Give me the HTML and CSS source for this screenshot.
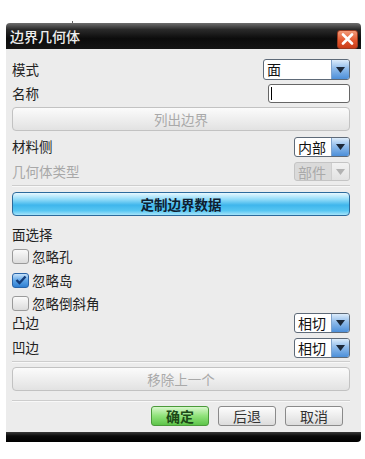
FILE: index.html
```html
<!DOCTYPE html>
<html lang="zh-CN">
<head>
    <meta charset="UTF-8">
    <meta name="viewport" content="width=device-width, initial-scale=1.0">
    <title>边界几何体</title>
    <link rel="stylesheet" href="styles.css">
</head>
<body>
    <div class="dialog">
        <div class="titlebar">
            <span class="title">边界几何体</span>
            <span class="close">
                <svg width="13" height="12" viewBox="0 0 13 12">
                    <path d="M2 1.5 L11 10.5 M11 1.5 L2 10.5" stroke="#fff" stroke-width="2.6" stroke-linecap="round" />
                </svg>
            </span>
        </div>

        <div class="pane">
            <div class="row r-mode">
                <span class="label">模式</span>
                <div class="select wide">
                    <span class="value">面</span>
                    <span class="arrow"><svg width="9" height="6" viewBox="0 0 9 6"><path d="M0 0 H9 L4.5 6 Z" /></svg></span>
                </div>
            </div>
            <div class="row r-name">
                <span class="label">名称</span>
                <div class="textbox"><span class="caret"></span></div>
            </div>
            <div class="btn disabled r-list">列出边界</div>

            <div class="row r-side">
                <span class="label">材料侧</span>
                <div class="select">
                    <span class="value">内部</span>
                    <span class="arrow"><svg width="9" height="6" viewBox="0 0 9 6"><path d="M0 0 H9 L4.5 6 Z" /></svg></span>
                </div>
            </div>
            <div class="row r-type">
                <span class="label muted">几何体类型</span>
                <div class="select off">
                    <span class="value">部件</span>
                    <span class="arrow"><svg width="9" height="6" viewBox="0 0 9 6"><path d="M0 0 H9 L4.5 6 Z" /></svg></span>
                </div>
            </div>
            <div class="sep s-1"></div>
            <div class="btn blue r-custom">定制边界数据</div>

            <div class="label group">面选择</div>
            <label class="check c-1"><span class="box"></span>忽略孔</label>
            <label class="check c-2"><span class="box on">
                <svg width="12" height="10" viewBox="0 0 12 10"><path d="M1.5 5 L4.5 8 L10.5 1.5" fill="none" stroke="#143c7a" stroke-width="2.4" /></svg>
            </span>忽略岛</label>
            <label class="check c-3"><span class="box"></span>忽略倒斜角</label>

            <div class="row r-convex">
                <span class="label">凸边</span>
                <div class="select">
                    <span class="value">相切</span>
                    <span class="arrow"><svg width="9" height="6" viewBox="0 0 9 6"><path d="M0 0 H9 L4.5 6 Z" /></svg></span>
                </div>
            </div>
            <div class="row r-concave">
                <span class="label">凹边</span>
                <div class="select">
                    <span class="value">相切</span>
                    <span class="arrow"><svg width="9" height="6" viewBox="0 0 9 6"><path d="M0 0 H9 L4.5 6 Z" /></svg></span>
                </div>
            </div>
            <div class="sep s-2"></div>
            <div class="btn disabled r-remove">移除上一个</div>
            <div class="sep s-3"></div>

            <div class="footer">
                <span class="fbtn ok">确定</span>
                <span class="fbtn">后退</span>
                <span class="fbtn">取消</span>
            </div>
        </div>
        <div class="bottombar"></div>
    </div>
</body>
</html>
```

FILE: styles.css
```css
body {
    margin: 0;
    background: #fff;
    font-family: "Noto Sans CJK SC", "Noto Sans", sans-serif;
}

.dialog {
    width: 355px;
    margin: 23px 0 0 6px;
}

/* title bar */
.titlebar {
    position: relative;
    height: 26px;
    display: flex;
    align-items: center;
    justify-content: space-between;
    padding: 0 3px 0 4px;
    border-radius: 4px 4px 0 0;
    background: linear-gradient(#6e6e6e 0%, #2a2a2a 25%, #0c0c0c 60%, #151515 100%);
}

.titlebar::before {
    content: "";
    position: absolute;
    left: 66px;
    top: -2px;
    width: 1px;
    height: 2px;
    background: #666;
}

.title {
    color: #eee;
    font-size: 14px;
    font-weight: 500;
    line-height: 1;
}

.close {
    width: 21px;
    height: 19px;
    margin-top: 6px;
    display: flex;
    align-items: center;
    justify-content: center;
    box-sizing: border-box;
    border: 1px solid #9a3a20;
    border-radius: 3px;
    background: linear-gradient(#f39a78, #e4582f 55%, #c83c18);
}

/* body */
.pane {
    display: flex;
    flex-direction: column;
    padding: 10px 11px 6px 6px;
    background: #ececec;
}

.row {
    display: flex;
    align-items: center;
    justify-content: space-between;
    height: 20px;
}

.label {
    font-size: 13.5px;
    color: #222;
    line-height: 1;
}

.label.muted {
    color: #a8a8a8;
}

.r-mode { height: 21px; }
.r-name { height: 19px; margin-top: 4px; }
.r-list { margin-top: 4px; }
.r-side { margin-top: 6px; }
.r-type { height: 19px; margin-top: 5px; }
.s-1 { margin-top: 4px; }
.r-custom { margin-top: 5px; }
.group { height: 18px; line-height: 18px; margin-top: 9px; }
.c-1 { margin-top: 5px; }
.c-2 { margin-top: 8px; }
.c-3 { margin-top: 7px; }
.r-convex { margin-top: 2px; }
.r-concave { margin-top: 5px; }
.s-2 { margin-top: 3px; }
.r-remove { height: 23px; margin-top: 4px; }
.s-3 { margin-top: 9px; }

/* drop-down lists */
.select {
    display: flex;
    width: 56px;
    height: 100%;
    box-sizing: border-box;
    border: 1px solid #5e6a78;
    border-radius: 3px;
    background: #fff;
    overflow: hidden;
}

.select.wide {
    width: 87px;
}

.select .value {
    flex: 1;
    padding-left: 3px;
    font-size: 14px;
    line-height: 18px;
    color: #111;
}

.select .arrow {
    width: 17px;
    display: flex;
    align-items: center;
    justify-content: center;
    border-left: 1px solid #7fa3cc;
    background: linear-gradient(#dcecfb, #8fbbea 45%, #4c8fd9 100%);
}

.select .arrow path {
    fill: #1c2838;
}

.select.off {
    border-color: #c4c4c4;
    background: #dadada;
}

.select.off .value {
    color: #a9a9a9;
}

.select.off .arrow {
    border-left-color: #cfcfcf;
    background: linear-gradient(#f2f2f2, #e2e2e2);
}

.select.off .arrow path {
    fill: #b2b2b2;
}

.textbox {
    width: 82px;
    height: 100%;
    box-sizing: border-box;
    display: flex;
    align-items: center;
    padding-left: 2px;
    border: 1px solid #666;
    border-radius: 3px;
    background: #fff;
}

.caret {
    width: 1px;
    height: 13px;
    background: #000;
}

/* wide push buttons */
.btn {
    height: 24px;
    box-sizing: border-box;
    display: flex;
    align-items: center;
    justify-content: center;
    border-radius: 4px;
    font-size: 13.5px;
}

.btn.disabled {
    border: 1px solid #c2c2c2;
    background: linear-gradient(#fbfbfb, #ececec 60%, #e2e2e2);
    color: #a9a9a9;
}

.btn.blue {
    border: 1px solid #2c6a9c;
    background: linear-gradient(#e8f8ff 0%, #8fdaf8 30%, #3fb6ec 55%, #56c6f2 80%, #a6e4fa 100%);
    color: #102030;
    font-weight: 700;
}

.sep {
    height: 1px;
    background: #cdcdcd;
    border-bottom: 1px solid #f8f8f8;
}

/* check boxes */
.check {
    display: flex;
    align-items: center;
    height: 16px;
    font-size: 13.5px;
    color: #222;
}

.box {
    width: 17px;
    height: 15px;
    margin: 0 3px 0 0;
    box-sizing: border-box;
    display: flex;
    align-items: center;
    justify-content: center;
    border: 1px solid #9a9a9a;
    border-radius: 3px;
    background: linear-gradient(#fafafa, #dcdcdc);
}

.box.on {
    border-color: #2a64a8;
    background: linear-gradient(#c6e2fb, #5ea4e6 50%, #2f7fd2);
}

/* bottom buttons */
.footer {
    display: flex;
    justify-content: flex-end;
    gap: 9px;
    height: 20px;
    margin-top: 4px;
    padding-right: 7px;
}

.fbtn {
    width: 58px;
    box-sizing: border-box;
    display: flex;
    align-items: center;
    justify-content: center;
    border: 1px solid #8a8a8a;
    border-radius: 3px;
    background: linear-gradient(#fdfdfd, #ebebeb 55%, #dcdcdc);
    font-size: 14px;
    color: #333;
}

.fbtn.ok {
    border-color: #4a9a3a;
    background: linear-gradient(#d8f7cc, #8fe27a 50%, #5ec44a);
    color: #1d4a18;
    font-weight: 700;
}

.bottombar {
    height: 10px;
    border-radius: 0 0 4px 0;
    background: linear-gradient(#3a3a3a, #0a0a0a 40%, #000);
}
```
